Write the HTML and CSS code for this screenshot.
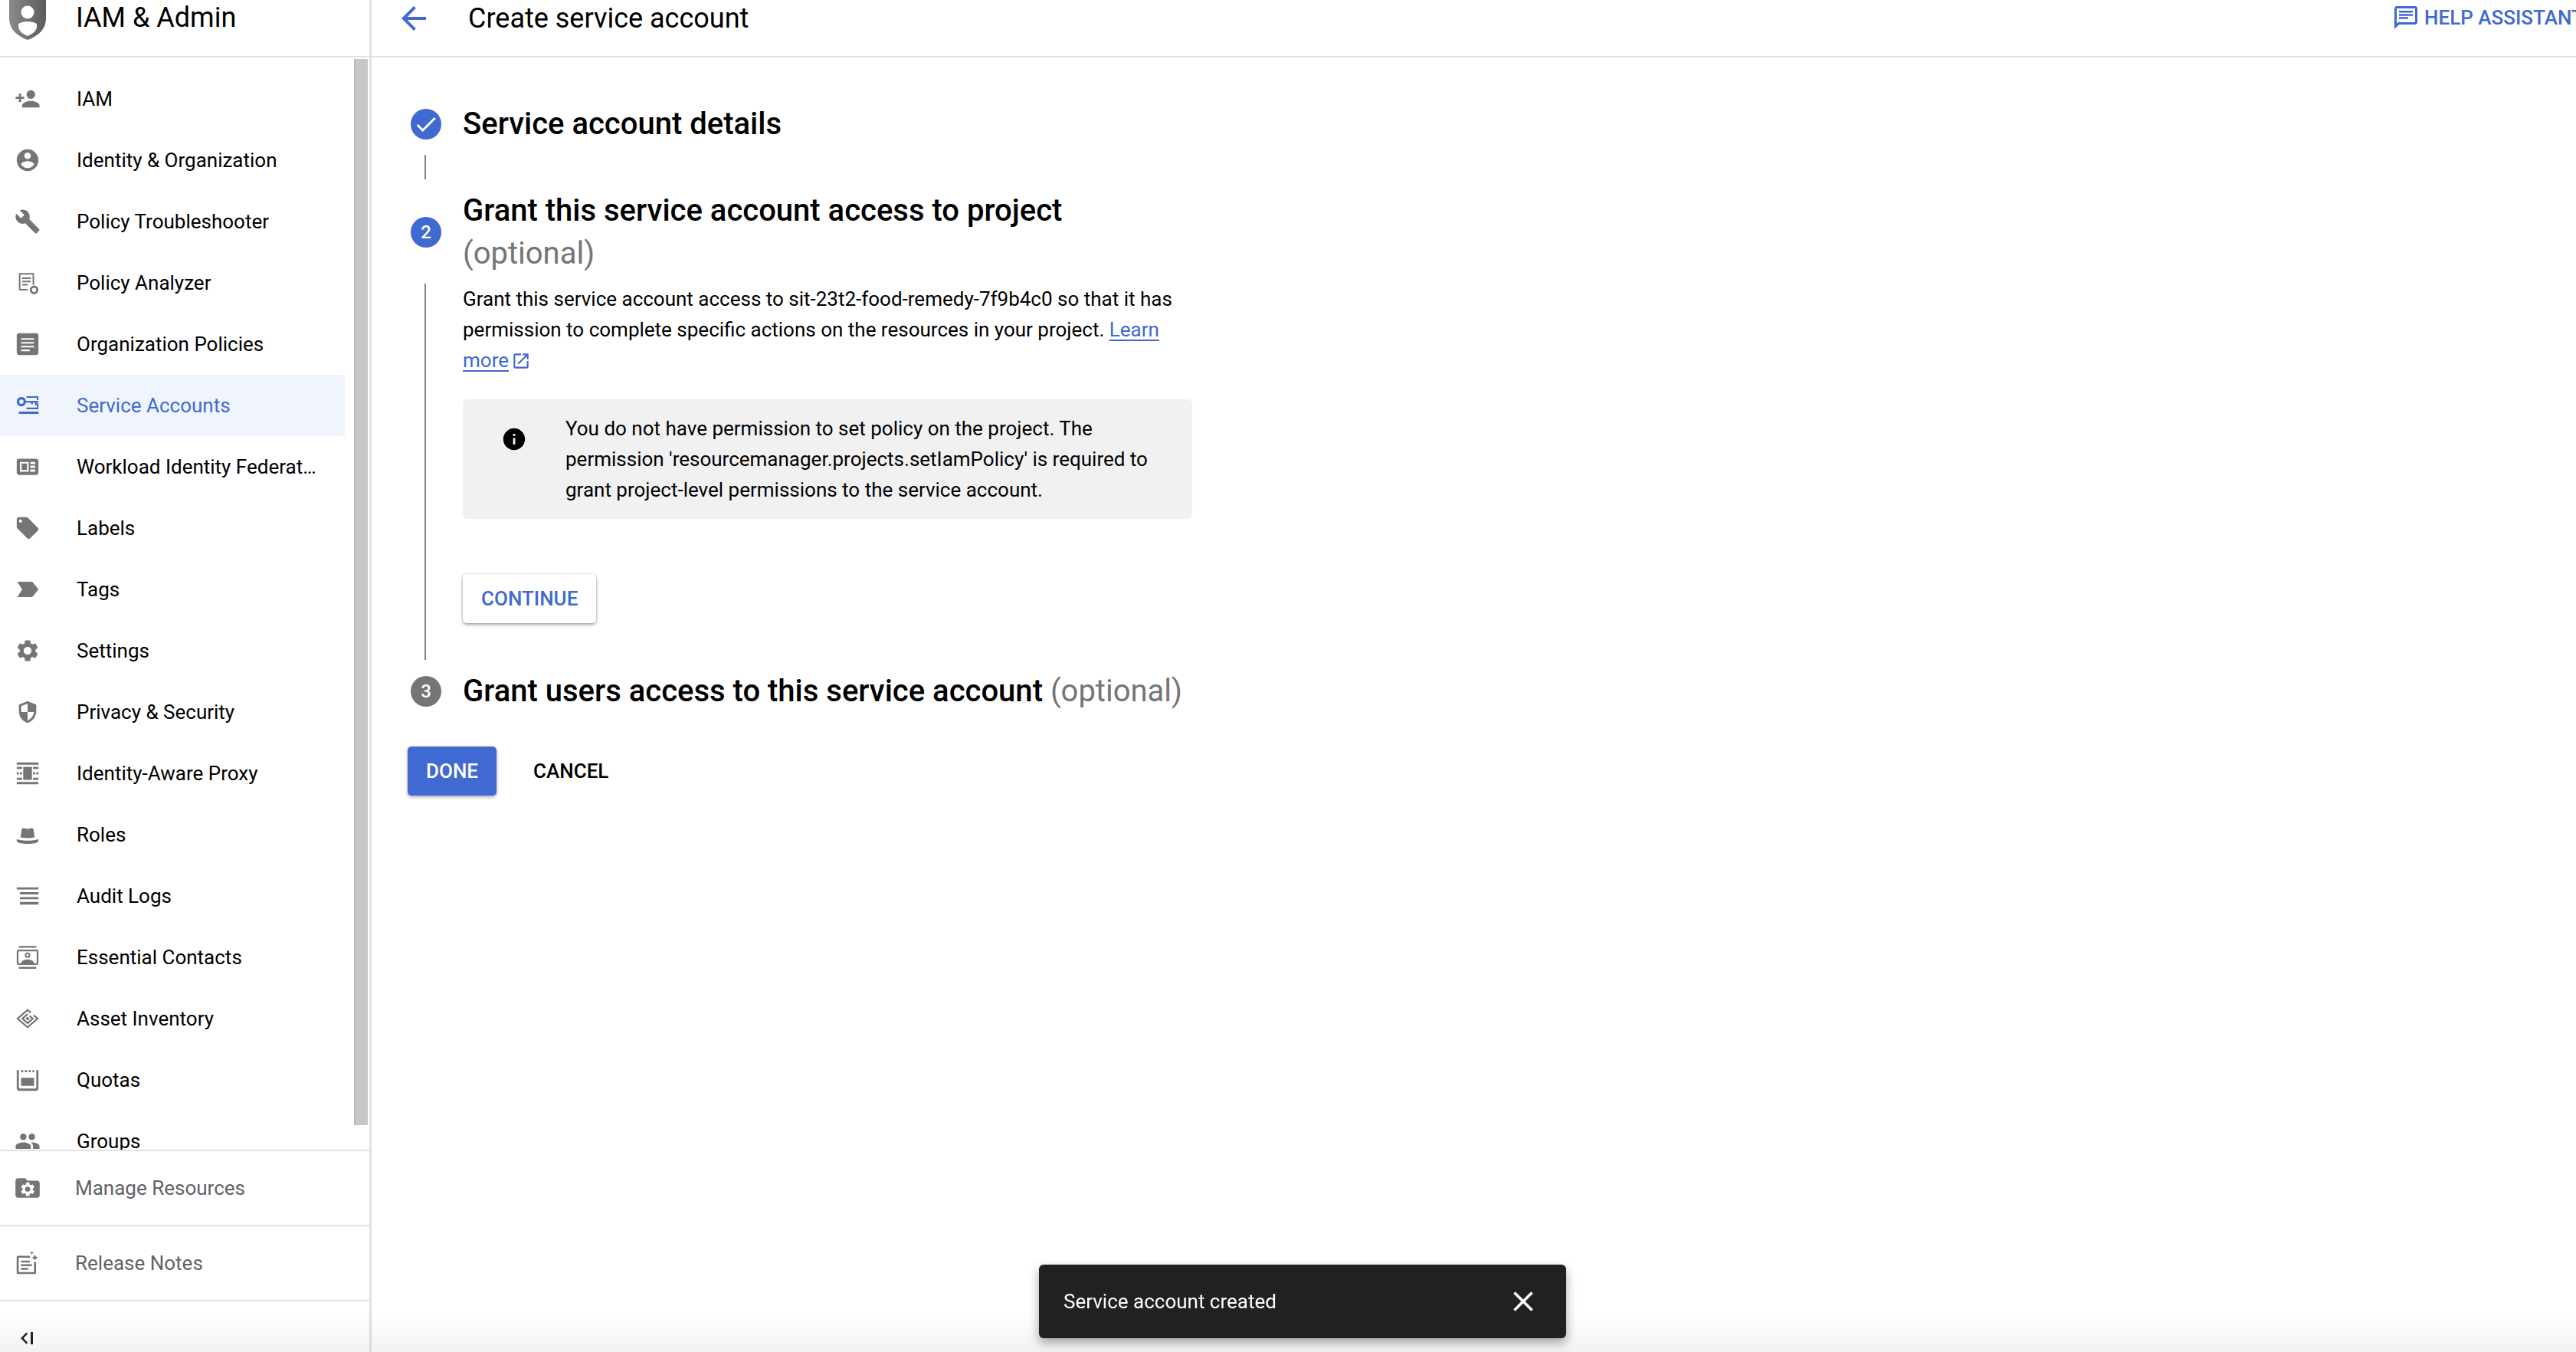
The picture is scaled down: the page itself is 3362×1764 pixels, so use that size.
FILE: index.html
```html
<!DOCTYPE html>
<html lang="en">
<head>
    <meta charset="UTF-8">
    <meta name="viewport" content="width=device-width, initial-scale=1.0">
    <title>Create service account</title>
    <link rel="stylesheet" href="styles.css">
</head>
<body>
    <aside class="sidebar">
        <div class="side-head">
            <svg class="logo" viewBox="0 0 48 52">
                <defs>
                    <linearGradient id="logoGrad" x1="0" y1="0" x2="1" y2="0">
                        <stop offset="0" stop-color="#8a8a8a"/>
                        <stop offset="1" stop-color="#5c5c5c"/>
                    </linearGradient>
                </defs>
                <path fill="url(#logoGrad)" d="M0 0h48v24c0 13-9 23-24 28C9 47 0 37 0 24z"/>
                <circle cx="24" cy="16" r="8.5" fill="#fff"/>
                <path fill="#fff" d="M12 31c7-4 17-4 24 0v3c0 6-5 10-12 13-7-3-12-7-12-13z"/>
            </svg>
            <span class="product">IAM &amp; Admin</span>
        </div>

        <div class="side-scroll">
            <nav class="nav-list">
                <a class="nav-item"><svg class="icon" viewBox="0 0 24 24"><path d="M15 12c2.21 0 4-1.79 4-4s-1.79-4-4-4-4 1.79-4 4 1.79 4 4 4zm-9-2V7H4v3H1v2h3v3h2v-3h3v-2H6zm9 4c-2.67 0-8 1.34-8 4v2h16v-2c0-2.66-5.33-4-8-4z"/></svg>IAM</a>
                <a class="nav-item"><svg class="icon" viewBox="0 0 24 24"><path d="M12 2C6.48 2 2 6.48 2 12s4.48 10 10 10 10-4.48 10-10S17.52 2 12 2zm0 3c1.66 0 3 1.34 3 3s-1.34 3-3 3-3-1.34-3-3 1.34-3 3-3zm0 14.2c-2.5 0-4.71-1.28-6-3.22.03-1.99 4-3.08 6-3.08 1.99 0 5.97 1.09 6 3.08-1.29 1.94-3.5 3.22-6 3.22z"/></svg>Identity &amp; Organization</a>
                <a class="nav-item"><svg class="icon" viewBox="0 0 24 24"><path d="M22.7 19l-9.1-9.1c.9-2.3.4-5-1.5-6.9-2-2-5-2.4-7.4-1.3L9 6 6 9 1.6 4.7C.4 7.1.9 10.1 2.9 12.1c1.9 1.9 4.6 2.4 6.9 1.5l9.1 9.1c.4.4 1 .4 1.4 0l2.3-2.3c.5-.4.5-1.1.1-1.4z"/></svg>Policy Troubleshooter</a>
                <a class="nav-item"><svg class="icon" viewBox="0 0 24 24"><path d="M5 3h12c.6 0 1 .4 1 1v10h-1.400V4.400H5.400v13.200H12V19H5c-.6 0-1-.4-1-1V4c0-.6.4-1 1-1zM7 7h8v1.400H7zM7 10h8v1.400H7zM7 13h5v1.400H7z"/><path fill-rule="evenodd" d="M18 14.500a4 4 0 1 1 0 8 4 4 0 0 1 0-8zm0 2a2 2 0 1 0 0 4 2 2 0 0 0 0-4z"/></svg>Policy Analyzer</a>
                <a class="nav-item"><svg class="icon" viewBox="0 0 24 24"><path fill-rule="evenodd" d="M4 2h16c1.100 0 2 .9 2 2v16c0 1.100-.9 2-2 2H4c-1.100 0-2-.9-2-2V4c0-1.100.9-2 2-2zm2 4.500V8h12V6.500zm0 3.500v1.500h12V10zm0 3.500V15h12v-1.500zm0 3.500v1.500h8V17z"/></svg>Organization Policies</a>
                <a class="nav-item active"><svg class="icon" viewBox="0 0 24 24"><path fill-rule="evenodd" d="M6.300 4.200a4.300 4.300 0 0 1 4.200 3.500h11.500v1.600h-1.500v2.400h-1.800V9.300h-1.800v1.500h-1.800V9.300h-4.600A4.300 4.300 0 1 1 6.300 4.200zm0 2.300a2 2 0 1 0 0 4 2 2 0 0 0 0-4z"/><path d="M11 3.500h11V7h-1.500V5H11zM20.500 10H22v5.500H11V14h9.500zM4 17.600h18v2.200H4z"/></svg>Service Accounts</a>
                <a class="nav-item"><svg class="icon" viewBox="0 0 24 24"><path fill-rule="evenodd" d="M4 4.500h16c1.100 0 2 .9 2 2v11c0 1.100-.9 2-2 2H4c-1.100 0-2-.9-2-2v-11c0-1.100.9-2 2-2zm1 3v9h8v-9zm1.500 1.500h5v6h-5zm8-1.500v2H19v-2zm0 3.500v2H19v-2zm0 3.500v2H19v-2z"/></svg>Workload Identity Federat…</a>
                <a class="nav-item"><svg class="icon" viewBox="0 0 24 24"><path d="M21.410 11.580l-9-9C12.050 2.220 11.550 2 11 2H4c-1.100 0-2 .9-2 2v7c0 .55.22 1.050.59 1.420l9 9c.36.36.86.58 1.410.58.55 0 1.050-.22 1.410-.59l7-7c.37-.36.59-.86.59-1.410 0-.55-.23-1.060-.59-1.420zM5.500 7C4.670 7 4 6.330 4 5.500S4.670 4 5.500 4 7 4.670 7 5.500 6.330 7 5.500 7z"/></svg>Labels</a>
                <a class="nav-item"><svg class="icon" viewBox="0 0 24 24"><path d="M2.500 19l13 .01c.67 0 1.270-.33 1.630-.84L22 12l-4.870-6.160c-.36-.51-.96-.84-1.630-.84l-13 .01L7 12z"/></svg>Tags</a>
                <a class="nav-item"><svg class="icon" viewBox="0 0 24 24"><path d="M19.140 12.940c.04-.3.06-.61.06-.94 0-.32-.02-.64-.07-.94l2.030-1.580c.18-.14.23-.41.12-.61l-1.920-3.320c-.12-.22-.37-.29-.59-.22l-2.390.96c-.5-.38-1.030-.7-1.620-.94l-.36-2.540c-.04-.24-.24-.41-.48-.41h-3.840c-.24 0-.43.17-.47.41l-.36 2.540c-.59.24-1.130.57-1.620.94l-2.390-.96c-.22-.08-.47 0-.59.22L2.740 8.870c-.12.21-.08.47.12.61l2.030 1.580c-.05.3-.09.63-.09.94s.02.64.07.94l-2.030 1.580c-.18.14-.23.41-.12.61l1.920 3.320c.12.22.37.29.59.22l2.390-.96c.5.38 1.030.7 1.620.94l.36 2.540c.05.24.24.41.48.41h3.840c.24 0 .44-.17.47-.41l.36-2.540c.59-.24 1.130-.56 1.620-.94l2.390.96c.22.08.47 0 .59-.22l1.920-3.320c.12-.22.07-.47-.12-.61l-2.010-1.580zM12 15.600c-1.980 0-3.600-1.620-3.600-3.600s1.620-3.600 3.600-3.600 3.600 1.620 3.600 3.600-1.620 3.600-3.600 3.600z"/></svg>Settings</a>
                <a class="nav-item"><svg class="icon" viewBox="0 0 24 24"><path d="M12 2L4 5.300v6c0 5 3.400 9.400 8 10.700 4.600-1.300 8-5.700 8-10.700v-6zm0 10h5.900c-.5 3.500-2.800 6.600-5.900 7.700V12H6.100V6.600L12 4.200z"/></svg>Privacy &amp; Security</a>
                <a class="nav-item"><svg class="icon" viewBox="0 0 24 24"><path d="M2 2h20v2H2zM2 20h20v2H2zM2 6h5v2H2zM17 6h5v2h-5zM2 11h2v2H2zM20 11h2v2h-2zM2 16h5v2H2zM17 16h5v2h-5zM8 6h8v12H8zM5 11h2v2H5zM17 11h2v2h-2z"/></svg>Identity-Aware Proxy</a>
                <a class="nav-item"><svg class="icon" viewBox="0 0 24 24"><path d="M5.500 14.500l1-7c.2-1.300 1-1.800 2-1.500l3.500.8 3.500-.8c1-.3 1.800.2 2 1.500l1 7c-4 .8-9 .8-13 0z"/><path d="M2 16c5 2 15 2 20 0v1.800c0 1.600-4.500 2.700-10 2.700S2 19.400 2 17.800z"/></svg>Roles</a>
                <a class="nav-item"><svg class="icon" viewBox="0 0 24 24"><path d="M2 4h20v2H2zM5 8.500h17v2H5zM5 13h17v2H5zM5 17.500h17v2.500H5z"/></svg>Audit Logs</a>
                <a class="nav-item"><svg class="icon" viewBox="0 0 24 24"><path fill-rule="evenodd" d="M4 1.500h16v1.600H4zM4 20.900h16v1.600H4zM3.500 5h17c.8 0 1.500.7 1.500 1.500v11c0 .8-.7 1.500-1.500 1.500h-17c-.8 0-1.500-.7-1.500-1.500v-11C2 5.700 2.700 5 3.500 5zm.1 1.600v10.800H6c.5-2.300 3.600-3.400 6-3.400s5.500 1.100 6 3.400h2.400V6.600zM12 7.500a2.500 2.500 0 1 1 0 5 2.500 2.500 0 0 1 0-5zm0 1.400a1.100 1.100 0 1 0 0 2.200 1.100 1.100 0 0 0 0-2.200z"/></svg>Essential Contacts</a>
                <a class="nav-item"><svg class="icon" viewBox="0 0 24 24"><path class="line" d="M15 6.600L12 4 2.800 12l9.200 8 9.200-8-3.600-3.100"/><path class="line" d="M12 7.800L7.200 12l4.800 4.200 4.800-4.200-3-2.600"/><path d="M12 10.200l2 1.800-2 1.800-2-1.800z"/></svg>Asset Inventory</a>
                <a class="nav-item"><svg class="icon" viewBox="0 0 24 24"><path d="M2 3h2v16c0 .6.4 1 1 1h14c.6 0 1-.4 1-1V3h2v17c0 1.100-.9 2-2 2H4c-1.100 0-2-.9-2-2zM6 10h12v7.500H6zM6 3h2v2H6zM9.500 3h2v2h-2zM13 3h2v2h-2zM16.500 3h1.500v2h-1.500z"/></svg>Quotas</a>
                <a class="nav-item"><svg class="icon" viewBox="0 0 24 24"><path d="M16 11c1.660 0 2.990-1.340 2.990-3S17.660 5 16 5c-1.660 0-3 1.340-3 3s1.340 3 3 3zm-8 0c1.660 0 2.990-1.340 2.990-3S9.660 5 8 5C6.340 5 5 6.340 5 8s1.340 3 3 3zm0 2c-2.330 0-7 1.170-7 3.500V19h14v-2.500c0-2.330-4.670-3.500-7-3.500zm8 0c-.29 0-.62.02-.97.05 1.160.84 1.970 1.970 1.970 3.450V19h6v-2.500c0-2.330-4.670-3.500-7-3.500z"/></svg>Groups</a>
            </nav>
            <div class="scrollbar"></div>
        </div>

        <a class="side-link"><svg class="icon wide" viewBox="0 0 24 24"><path d="M20 6h-8l-2-2H4c-1.100 0-1.990.9-1.990 2L2 18c0 1.100.9 2 2 2h16c1.100 0 2-.9 2-2V8c0-1.100-.9-2-2-2z"/><path fill="#fff" d="M16.300 13.600c.02-.17.03-.35.03-.55 0-.18-.01-.37-.04-.55l1.190-.92c.1-.08.13-.24.07-.36l-1.120-1.940c-.07-.13-.22-.17-.34-.13l-1.400.56c-.29-.22-.6-.41-.95-.55l-.21-1.480c-.02-.14-.14-.24-.28-.24h-2.240c-.14 0-.25.1-.27.24l-.21 1.480c-.34.14-.66.33-.95.55l-1.400-.56c-.13-.05-.27 0-.34.13L6.720 11.220c-.07.12-.05.27.07.36l1.190.92c-.03.18-.05.37-.05.55s.01.37.04.55l-1.190.92c-.1.08-.13.24-.07.36l1.120 1.940c.07.13.22.17.34.13l1.400-.56c.29.22.6.41.95.55l.21 1.480c.03.14.14.24.28.24h2.240c.14 0 .26-.1.27-.24l.21-1.480c.34-.14.66-.33.95-.55l1.400.56c.13.05.27 0 .34-.13l1.120-1.940c.07-.13.04-.27-.07-.36zM12 15.100a2.100 2.100 0 1 1 0-4.200 2.100 2.100 0 0 1 0 4.200z"/></svg>Manage Resources</a>
        <a class="side-link"><svg class="icon wide" viewBox="0 0 24 24"><path fill-rule="evenodd" d="M4 6h10v1.600H4.700v11.800h12.600V11H19v9c0 .6-.4 1-1 1H4c-.6 0-1-.4-1-1V7c0-.6.4-1 1-1zM6.500 10H14v1.500H6.500zM6.500 13H15.500v1.500h-9zM6.500 16h6v1.500h-6z"/><path d="M18 5l.8 1.700 1.700.8-1.700.8L18 10l-.8-1.700-1.700-.8 1.700-.8zM15.500 2l.5 1.100 1.100.5-1.100.5-.5 1.100-.5-1.100-1.100-.5 1.100-.5z"/></svg>Release Notes</a>
        <div class="side-foot">
            <svg class="collapse" viewBox="0 0 20 20"><path d="M9.500 2.500L2 10l7.500 7.500 1.800-1.800L5.600 10l5.700-5.700zM15 2h3v16h-3z"/></svg>
        </div>
    </aside>

    <div class="main">
        <header class="page-head">
            <svg class="back" viewBox="0 0 24 24"><path d="M20 11H7.830l5.590-5.590L12 4l-8 8 8 8 1.410-1.410L7.830 13H20v-2z"/></svg>
            <h1 class="page-title">Create service account</h1>
            <a class="help"><svg class="help-icon" viewBox="0 0 24 24"><path d="M20 2H4c-1.100 0-1.990.9-1.990 2L2 22l4-4h14c1.100 0 2-.9 2-2V4c0-1.100-.9-2-2-2zm0 14H5.170L4 17.170V4h16v12z"/><path d="M6 11.500h8v1.700H6zM6 8.800h12v1.700H6zM6 6h12v1.700H6z"/></svg>HELP ASSISTANT</a>
        </header>

        <section class="stepper">
            <div class="step">
                <span class="badge"><svg viewBox="0 0 24 24"><path d="M9 16.170L4.830 12l-1.420 1.410L9 19 21 7l-1.410-1.410z"/></svg></span>
                <h2 class="step-title">Service account details</h2>
            </div>
            <div class="rail short"></div>

            <div class="step tall">
                <span class="badge">2</span>
                <h2 class="step-title">Grant this service account access to project <span class="optional">(optional)</span></h2>
            </div>
            <div class="step-body">
                <div class="rail"></div>
                <div class="step-content">
                    <p class="desc">Grant this service account access to sit-23t2-food-remedy-7f9b4c0 so that it has permission to complete specific actions on the resources in your project. <a class="learn">Learn more</a><svg class="ext" viewBox="0 0 24 24"><path d="M19 19H5V5h7V3H5c-1.110 0-2 .9-2 2v14c0 1.100.89 2 2 2h14c1.100 0 2-.9 2-2v-7h-2v7zM14 3v2h3.590l-9.830 9.830 1.410 1.410L19 6.410V10h2V3h-7z"/></svg></p>
                    <div class="callout">
                        <svg class="info" viewBox="0 0 24 24"><path d="M12 2C6.480 2 2 6.480 2 12s4.480 10 10 10 10-4.480 10-10S17.520 2 12 2zm1 15h-2v-6h2v6zm0-8h-2V7h2v2z"/></svg>
                        <p>You do not have permission to set policy on the project. The permission 'resourcemanager.projects.setIamPolicy' is required to grant project-level permissions to the service account.</p>
                    </div>
                    <button class="btn btn-raised">CONTINUE</button>
                </div>
            </div>

            <div class="step last">
                <span class="badge muted">3</span>
                <h2 class="step-title">Grant users access to this service account <span class="optional">(optional)</span></h2>
            </div>
        </section>

        <div class="actions">
            <button class="btn btn-primary">DONE</button>
            <button class="btn btn-text">CANCEL</button>
        </div>
    </div>

    <div class="snackbar">
        <span>Service account created</span>
        <svg class="snack-close" viewBox="0 0 24 24"><path d="M19 6.410L17.590 5 12 10.590 6.410 5 5 6.410 10.590 12 5 17.590 6.410 19 12 13.410 17.590 19 19 17.590 13.410 12z"/></svg>
    </div>
</body>
</html>
```

FILE: styles.css
```css
* {
    box-sizing: border-box;
}
html, body {
    height: 100%;
}
body {
    margin: 0;
    display: flex;
    overflow: hidden;
    background: #fff;
    color: #000;
    font-family: Roboto, "Liberation Sans", sans-serif;
    font-size: 26px;
}
body::after {
    content: "";
    position: fixed;
    left: 0;
    right: 0;
    bottom: 0;
    height: 50px;
    background: linear-gradient(rgba(0, 0, 0, 0), rgba(0, 0, 0, 0.05));
    pointer-events: none;
}

/* sidebar */
.sidebar {
    width: 485px;
    flex: none;
    height: 100%;
    display: flex;
    flex-direction: column;
    border-right: 3px solid #e2e2e2;
}
.side-head {
    height: 75px;
    flex: none;
    display: flex;
    align-items: flex-start;
    padding-left: 12px;
    border-bottom: 2px solid #e2e2e2;
    overflow: hidden;
}
.logo {
    width: 48px;
    height: 52px;
    flex: none;
}
.product {
    margin-left: 39px;
    font-size: 36px;
    line-height: 46px;
}
.side-scroll {
    flex: none;
    height: 1425px;
    display: flex;
    overflow: hidden;
}
.nav-list {
    width: 450px;
    flex: none;
    padding-top: 14px;
}
.nav-item {
    height: 80px;
    display: flex;
    align-items: center;
    padding-left: 19px;
    white-space: nowrap;
}
.icon {
    width: 34px;
    height: 34px;
    flex: none;
    margin-right: 47px;
    fill: #757575;
}
.icon .line {
    fill: none;
    stroke: #757575;
    stroke-width: 1.6;
}
.nav-item.active {
    background: #f0f4fc;
    color: #4069d2;
}
.nav-item.active .icon {
    fill: #4069d2;
}
.scrollbar {
    width: 18px;
    height: 1391px;
    margin: 2px 0 0 12px;
    background: #c8c8c8;
    border-left: 2px solid #b8b8b8;
}
.side-link {
    height: 98px;
    flex: none;
    display: flex;
    align-items: center;
    padding-left: 17px;
    color: #5f6368;
    border-top: 2px solid #e2e2e2;
}
.side-link .wide {
    width: 38px;
    height: 38px;
    margin-right: 43px;
}
.side-foot {
    flex: 1;
    display: flex;
    align-items: flex-end;
    padding: 0 0 8px 25px;
    border-top: 2px solid #e2e2e2;
}
.collapse {
    width: 20px;
    height: 20px;
    fill: #202124;
}

/* main */
.main {
    flex: 1;
    min-width: 0;
}
.page-head {
    height: 75px;
    display: flex;
    align-items: flex-start;
    padding-left: 31px;
    border-bottom: 2px solid #e2e2e2;
}
.back {
    width: 48px;
    height: 48px;
    flex: none;
    fill: #4069d2;
}
.page-title {
    margin: 0 0 0 47px;
    font-size: 36px;
    font-weight: 400;
    line-height: 48px;
}
.help {
    margin-left: auto;
    width: 237px;
    display: flex;
    align-items: center;
    height: 46px;
    color: #4069d2;
    font-size: 26px;
    font-weight: 500;
    white-space: nowrap;
    overflow: hidden;
}
.help-icon {
    width: 36px;
    height: 36px;
    flex: none;
    margin-right: 6px;
    margin-left: -3px;
    fill: #4069d2;
}
.stepper {
    padding: 59px 0 0 51px;
}
.step {
    display: flex;
    align-items: center;
    gap: 28px;
}
.step.tall {
    margin-top: 13px;
}
.step.last {
    margin-top: 13px;
}
.badge {
    width: 40px;
    height: 40px;
    flex: none;
    display: flex;
    align-items: center;
    justify-content: center;
    border-radius: 50%;
    background: #4069d2;
    color: #fff;
    font-size: 24px;
    font-weight: 500;
}
.badge svg {
    width: 34px;
    height: 34px;
    fill: #fff;
}
.badge.muted {
    background: #757575;
}
.step-title {
    margin: 0;
    width: 951px;
    font-size: 40px;
    font-weight: 500;
    line-height: 56px;
}
.optional {
    color: #757575;
    font-weight: 400;
}
.rail {
    width: 2px;
    margin-left: 18px;
    background: #80868b;
    flex: none;
}
.rail.short {
    height: 32px;
    margin-top: 12px;
}
.step-body {
    display: flex;
    margin-top: 11px;
    height: 491px;
}
.step-content {
    margin-left: 48px;
    width: 952px;
}
.desc {
    margin: 0;
    line-height: 40px;
}
.learn {
    color: #4069d2;
    text-decoration: underline;
    text-underline-offset: 4px;
}
.ext {
    width: 26px;
    height: 26px;
    margin-left: 3px;
    vertical-align: -5px;
    fill: #4069d2;
}
.callout {
    display: flex;
    margin-top: 31px;
    padding: 18px 30px 18px 50px;
    background: #f1f1f1;
    border-radius: 6px;
    line-height: 40px;
}
.callout p {
    margin: 0;
}
.info {
    width: 34px;
    height: 34px;
    flex: none;
    margin: 17px 50px 0 0;
    fill: #000;
}
.btn {
    height: 64px;
    padding: 0 24px;
    border: none;
    border-radius: 5px;
    font-family: inherit;
    font-size: 26px;
    font-weight: 500;
}
.btn-raised {
    margin-top: 72px;
    background: #fff;
    color: #4069d2;
    box-shadow: 0 2px 4px rgba(0, 0, 0, 0.35), 0 0 3px rgba(0, 0, 0, 0.12);
}
.actions {
    display: flex;
    align-items: center;
    gap: 24px;
    margin: 44px 0 0 47px;
}
.btn-primary {
    background: #4069d2;
    color: #fff;
    box-shadow: 0 2px 4px rgba(0, 0, 0, 0.35);
}
.btn-text {
    background: none;
    color: #000;
}

/* snackbar */
.snackbar {
    position: fixed;
    left: 1356px;
    top: 1650px;
    width: 688px;
    height: 96px;
    display: flex;
    align-items: center;
    justify-content: space-between;
    padding: 0 34px 0 32px;
    background: #212121;
    color: #fff;
    border-radius: 6px;
    box-shadow: 0 6px 14px rgba(0, 0, 0, 0.35);
    z-index: 2;
}
.snack-close {
    width: 44px;
    height: 44px;
    fill: #fff;
}
```
